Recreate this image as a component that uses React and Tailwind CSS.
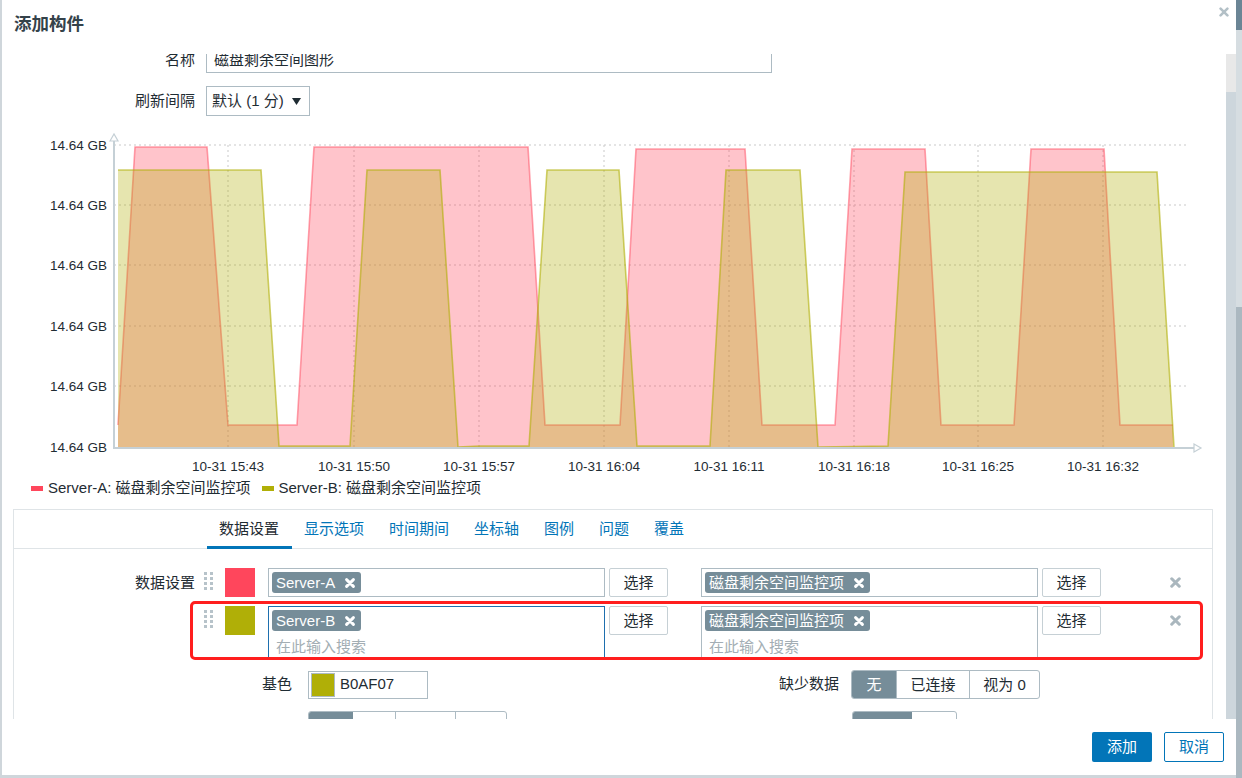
import React from "react";

const font = "font-['Liberation_Sans','Noto_Sans_CJK_SC',sans-serif]";

const red = [
  [118, 425], [135, 147], [207, 147], [228, 425], [297, 425], [314, 147], [528, 147],
  [545, 425], [620, 425], [636, 149], [745, 149], [762, 425], [835, 425], [852, 149],
  [925, 149], [941, 425], [1014, 425], [1031, 149], [1104, 149], [1120, 425], [1173, 425],
];

const olive = [
  [118, 170], [261, 170], [279, 446], [350, 446], [367, 170], [440, 170], [458, 447],
  [480, 446], [529, 446], [547, 170], [619, 170], [637, 446], [710, 446], [726, 170],
  [800, 170], [818, 447], [888, 446], [905, 172], [1157, 172], [1174, 447],
];

const yTicks = [145, 205, 265, 326, 386, 447];
const xTicks = [
  [228, "10-31 15:43"], [354, "10-31 15:50"], [479, "10-31 15:57"], [604, "10-31 16:04"],
  [729, "10-31 16:11"], [854, "10-31 16:18"], [978, "10-31 16:25"], [1103, "10-31 16:32"],
];

const pts = (list) => list.map((p) => p.join(",")).join(" ");

function XMark({ size = 10, color = "#fff", width = 2.4 }) {
  return (
    <svg width={size} height={size} viewBox="0 0 10 10" className="block shrink-0">
      <path d="M1.6 1.6L8.4 8.4M8.4 1.6L1.6 8.4" stroke={color} strokeWidth={width} strokeLinecap="round" />
    </svg>
  );
}

function Chart() {
  return (
    <svg width="1224" height="352" viewBox="2 125 1224 352" className="block">
      {yTicks.slice(0, 5).map((y) => (
        <line key={y} x1="114" x2="1186" y1={y} y2={y} stroke="#c9c9c9" strokeDasharray="2 3" />
      ))}
      {xTicks.map(([x]) => (
        <line key={x} x1={x} x2={x} y1="145" y2="447" stroke="#c9c9c9" strokeDasharray="2 3" />
      ))}
      <polygon points={pts([...red, [1173, 447], [118, 447]])} fill="rgba(255,70,92,0.32)" />
      <polyline points={pts(red)} fill="none" stroke="rgba(255,70,92,0.5)" strokeWidth="1.6" />
      <polygon points={pts([...olive, [118, 447]])} fill="rgba(176,175,7,0.32)" />
      <polyline points={pts(olive)} fill="none" stroke="rgba(176,175,7,0.6)" strokeWidth="1.6" />

      <line x1="114" x2="114" y1="140" y2="449" stroke="#c5d0d6" strokeWidth="2" />
      <polygon points="110,141 114,134 118,141" fill="#fff" stroke="#c5d0d6" strokeWidth="1.2" />
      <line x1="113" x2="1194" y1="448" y2="448" stroke="#c5d0d6" strokeWidth="2" />
      <polygon points="1194,444 1201,448 1194,452" fill="#fff" stroke="#c5d0d6" strokeWidth="1.2" />

      {yTicks.map((y) => (
        <text key={y} x="107" y={y + 5} textAnchor="end" fontSize="13.5" fill="#1f2c33" fontFamily="Liberation Sans, sans-serif">
          14.64 GB
        </text>
      ))}
      {xTicks.map(([x, t]) => (
        <text key={t} x={x} y="471" textAnchor="middle" fontSize="13.5" fill="#1f2c33" fontFamily="Liberation Sans, sans-serif">
          {t}
        </text>
      ))}
    </svg>
  );
}

function Handle() {
  return (
    <div className="ml-[9px] mt-[4px] grid grid-cols-2 gap-x-[3px] gap-y-[2px]">
      {[0, 1, 2, 3, 4, 5, 6, 7].map((i) => (
        <span key={i} className="w-[3px] h-[3px] bg-[#b7c3ca]" />
      ))}
    </div>
  );
}

function Tag({ children }) {
  return (
    <span className="inline-flex items-center h-[21px] rounded-[3px] bg-[#768d99] text-white pl-[4px] pr-[6px] leading-[21px]">
      <span>{children}</span>
      <span className="ml-[10px]">
        <XMark size={10} width={2.9} />
      </span>
    </span>
  );
}

function SelectBtn() {
  return (
    <button className="ml-[4px] w-[59px] h-[29px] border border-[#c6d0d5] rounded-[2px] bg-white text-[#1f2c33] leading-[27px]">
      选择
    </button>
  );
}

function DataRow({ color, host, label, focused, search }) {
  return (
    <div className="flex items-start">
      <div className="w-[181px] text-right leading-[29px]">{label}</div>
      <Handle />
      <div className="ml-[12px] w-[30px] h-[29px]" style={{ background: color }} />
      <div
        className={`ml-[13px] w-[337px] border px-[3px] pt-[3px] ${search ? "h-[52px]" : "h-[29px]"} ${
          focused ? "border-[#1e6fae]" : "border-[#adbbc3]"
        }`}
      >
        <Tag>{host}</Tag>
        {search && <div className="pl-[4px] mt-[3px] leading-[22px] text-[#a3aeb4]">在此输入搜索</div>}
      </div>
      <SelectBtn />
      <div className={`ml-[33px] w-[337px] border border-[#adbbc3] px-[3px] pt-[3px] ${search ? "h-[52px]" : "h-[29px]"}`}>
        <Tag>磁盘剩余空间监控项</Tag>
        {search && <div className="pl-[4px] mt-[3px] leading-[22px] text-[#a3aeb4]">在此输入搜索</div>}
      </div>
      <SelectBtn />
      <div className="ml-[69px] mt-[9px]">
        <XMark size={11} color="#aab7be" width={2.8} />
      </div>
    </div>
  );
}

const tabs = ["数据设置", "显示选项", "时间期间", "坐标轴", "图例", "问题", "覆盖"];

export default function App() {
  return (
    <div className={`w-[1242px] h-[778px] flex bg-[#cfd6db] overflow-hidden text-[15px] text-[#1f2c33] ${font}`}>
      <div className="ml-[2px] w-[1234px] h-[775px] bg-white flex flex-col">
        {/* header */}
        <div className="h-[54px] relative shrink-0">
          <div className="pl-[12px] pt-[12px] leading-[24px] text-[17.5px] font-bold text-[#34424a]">添加构件</div>
          <div className="absolute left-[1217px] top-[7px]">
            <XMark size={10} color="#b3c0c7" width={2.6} />
          </div>
        </div>

        {/* body */}
        <div className="flex h-[665px] shrink-0">
          <div className="w-[1224px] h-full overflow-hidden">
            <div className="mt-[-7px]">
              <div className="flex items-center h-[26px]">
                <div className="w-[193px] text-right">名称</div>
                <div className="ml-[11px] w-[566px] h-[26px] border border-[#adbbc3] px-[7px] leading-[24px]">磁盘剩余空间图形</div>
              </div>
              <div className="flex items-center h-[30px] mt-[13px]">
                <div className="w-[193px] text-right">刷新间隔</div>
                <div className="ml-[11px] w-[104px] h-[30px] border border-[#adbbc3] pl-[5px] pr-[8px] flex items-center justify-between">
                  <span>默认 (1 分)</span>
                  <svg width="9" height="7" viewBox="0 0 9 7" className="block">
                    <polygon points="0,0 9,0 4.5,7" fill="#1f2c33" />
                  </svg>
                </div>
              </div>

              <div className="mt-[9px]">
                <Chart />
              </div>

              <div className="h-[22px] flex items-center pl-[29px]">
                <span className="w-[12px] h-[5px] bg-[#ff465c]" />
                <span className="ml-[5px]">Server-A: 磁盘剩余空间监控项</span>
                <span className="ml-[11px] w-[12px] h-[5px] bg-[#b0af07]" />
                <span className="ml-[5px]">Server-B: 磁盘剩余空间监控项</span>
              </div>

              {/* tab box */}
              <div className="mt-[10px] ml-[11px] w-[1200px] h-[320px] border border-b-0 border-[#dfe4e7]">
                <div className="h-[39px] border-b border-[#dfe4e7] flex pl-[193px]">
                  {tabs.map((t, i) => (
                    <div
                      key={t}
                      className={`relative h-[38px] flex items-center pl-[12px] pr-[13px] ${
                        i === 0 ? "text-[#1f2c33]" : "text-[#0275b8]"
                      }`}
                    >
                      {t}
                      {i === 0 && <span className="absolute left-0 right-0 bottom-[-1px] h-[3px] bg-[#0275b8]" />}
                    </div>
                  ))}
                </div>

                <div className="pt-[19px] relative">
                  <DataRow label="数据设置" color="#ff465c" host="Server-A" />
                  <div className="mt-[9px]">
                    <DataRow color="#b0af07" host="Server-B" focused search />
                  </div>
                  <div className="absolute left-[176px] top-[52px] w-[1013px] h-[59px] border-[3px] border-[#ff1e1e] rounded-[5px]" />

                  <div className="mt-[12px] flex items-center h-[29px]">
                    <div className="w-[278px] text-right">基色</div>
                    <div className="ml-[16px] w-[120px] h-[28px] border border-[#adbbc3] flex items-center pl-[2px]">
                      <span className="w-[24px] h-[24px] border border-[#adbbc3] bg-[#b0af07]" />
                      <span className="ml-[5px]">B0AF07</span>
                    </div>
                    <div className="w-[411px] text-right">缺少数据</div>
                    <div className="ml-[12px] flex h-[29px] border border-[#adbbc3] rounded-[3px] overflow-hidden leading-[27px]">
                      <span className="w-[44px] text-center bg-[#768d99] text-white">无</span>
                      <span className="w-[73px] text-center border-l border-[#adbbc3]">已连接</span>
                      <span className="w-[70px] text-center border-l border-[#adbbc3]">视为 0</span>
                    </div>
                  </div>

                  <div className="mt-[12px] flex h-[29px]">
                    <div className="ml-[294px] flex border border-[#adbbc3] rounded-[3px] overflow-hidden">
                      <span className="w-[44px] bg-[#768d99]" />
                      <span className="w-[42px]" />
                      <span className="w-[60px] border-l border-[#adbbc3]" />
                      <span className="w-[51px] border-l border-[#adbbc3]" />
                    </div>
                    <div className="ml-[345px] flex border border-[#adbbc3] rounded-[3px] overflow-hidden">
                      <span className="w-[59px] bg-[#768d99]" />
                      <span className="w-[44px]" />
                    </div>
                  </div>
                </div>
              </div>
            </div>
          </div>
          <div className="w-[10px] flex flex-col">
            <div className="h-[38px] bg-[#e8e8e8]" />
            <div className="flex-1 bg-[#cdd6dc]" />
          </div>
        </div>

        {/* footer */}
        <div className="h-[56px] flex justify-end items-start pt-[13px] pr-[12px] gap-[12px]">
          <button className="w-[60px] h-[30px] bg-[#0275b8] text-white rounded-[2px]">添加</button>
          <button className="w-[60px] h-[30px] border border-[#0275b8] text-[#0275b8] bg-white rounded-[2px]">取消</button>
        </div>
      </div>
      <div className="w-[6px] flex flex-col">
        <div className="h-[30px] bg-[#6b8595]" />
        <div className="h-[277px] bg-[#d6dde1]" />
        <div className="flex-1 bg-[#abb8c0]" />
      </div>
    </div>
  );
}
